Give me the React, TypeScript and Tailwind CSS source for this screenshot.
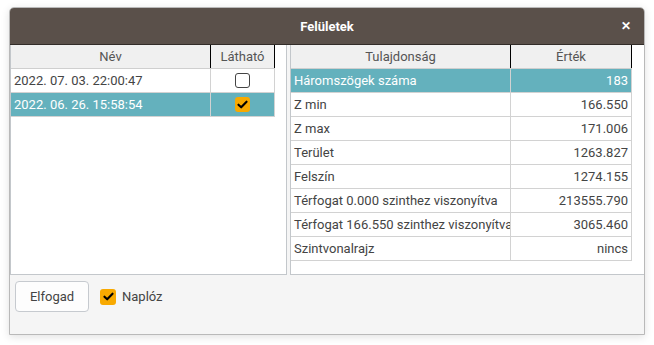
import React from "react";

const rows = [
  { name: "Háromszögek száma", value: "183", selected: true },
  { name: "Z min", value: "166.550" },
  { name: "Z max", value: "171.006" },
  { name: "Terület", value: "1263.827" },
  { name: "Felszín", value: "1274.155" },
  { name: "Térfogat 0.000 szinthez viszonyítva", value: "213555.790" },
  { name: "Térfogat 166.550 szinthez viszonyítva", value: "3065.460" },
  { name: "Szintvonalrajz", value: "nincs" },
];

const Check: React.FC<{ checked?: boolean; size?: string }> = ({ checked, size = "w-[15px] h-[15px]" }) =>
  checked ? (
    <div className={`${size} rounded-[3px] bg-[#f8a900] flex items-center justify-center`}>
      <svg viewBox="0 0 16 16" className="w-[13px] h-[13px]">
        <path d="M3 8.2 L6.4 11.4 L13 4.6" fill="none" stroke="#000" strokeWidth="2.6" strokeLinecap="round" strokeLinejoin="round" />
      </svg>
    </div>
  ) : (
    <div className={`${size} rounded-[3px] border border-[#444] bg-white`} />
  );

const App: React.FC = () => {
  return (
    <div className="w-[654px] h-[345px] bg-white pt-[7px] pl-[9px] font-['Roboto',sans-serif] text-[13px]">
      <div className="w-[636px] h-[328px] flex flex-col rounded-t-[5px] border border-[#b9b9b9] bg-[#f5f5f5] shadow-[0_2px_8px_rgba(0,0,0,0.12)] overflow-hidden">
        {/* Title bar */}
        <div className="relative h-[37px] bg-[#5a504a] border-b border-[#322c28] flex items-center justify-center shrink-0">
          <span className="text-white font-bold text-[13px] pt-[2px]">Felületek</span>
          <span className="absolute right-[13px] top-[10px] text-white font-bold text-[12px] leading-[16px]">✕</span>
        </div>

        {/* Panels */}
        <div className="flex gap-[3px] h-[230px] shrink-0">
          {/* Left panel */}
          <div className="w-[277px] h-full bg-white border border-[#c3c7cb] border-t-0">
            <div className="w-[264px]">
              <div className="flex h-[24px] bg-[#f0f0f0] text-[#555] border-b border-[#cfcfcf]">
                <div className="w-[200px] flex items-center justify-center border-r border-black">Név</div>
                <div className="w-[64px] flex items-center justify-center border-r border-black">Látható</div>
              </div>
              <div className="flex h-[24px] text-[#444] border-b border-[#d2d2d2]">
                <div className="w-[200px] flex items-center pl-[3px] border-r border-[#d2d2d2]">2022. 07. 03. 22:00:47</div>
                <div className="w-[64px] flex items-center justify-center border-r border-[#d2d2d2]">
                  <Check />
                </div>
              </div>
              <div className="flex h-[24px] text-white bg-[#64b1bd] border-b border-[#d2d2d2]">
                <div className="w-[200px] flex items-center pl-[3px] border-r border-[#d2d2d2]">2022. 06. 26. 15:58:54</div>
                <div className="w-[64px] flex items-center justify-center border-r border-[#d2d2d2]">
                  <Check checked />
                </div>
              </div>
            </div>
          </div>

          {/* Right panel */}
          <div className="flex-1 h-full bg-white border-l border-b border-[#c3c7cb]">
            <div className="w-[341px]">
              <div className="flex h-[24px] bg-[#f0f0f0] text-[#555] border-b border-[#cfcfcf]">
                <div className="w-[220px] flex items-center justify-center border-r border-black">Tulajdonság</div>
                <div className="w-[121px] flex items-center justify-center border-r border-black">Érték</div>
              </div>
              {rows.map((r) => (
                <div
                  key={r.name}
                  className={`flex h-[24px] border-b border-[#d2d2d2] ${r.selected ? "bg-[#64b1bd] text-white" : "text-[#444]"}`}
                >
                  <div className="w-[220px] flex items-center pl-[3px] border-r border-[#d2d2d2] overflow-hidden whitespace-nowrap">
                    {r.name}
                  </div>
                  <div className="w-[121px] flex items-center justify-end pr-[3px] border-r border-[#d2d2d2]">{r.value}</div>
                </div>
              ))}
            </div>
          </div>
        </div>

        {/* Bottom bar */}
        <div className="flex items-center gap-[11px] pl-[5px] pt-[6px]">
          <button className="w-[74px] h-[31px] rounded-[4px] border border-[#c6cacf] bg-[#fdfdfd] text-[#444] text-[13px]">
            Elfogad
          </button>
          <div className="flex items-center gap-[6px] text-[#444]">
            <Check checked size="w-[16px] h-[16px]" />
            <span>Naplóz</span>
          </div>
        </div>
      </div>
    </div>
  );
};

export default App;
